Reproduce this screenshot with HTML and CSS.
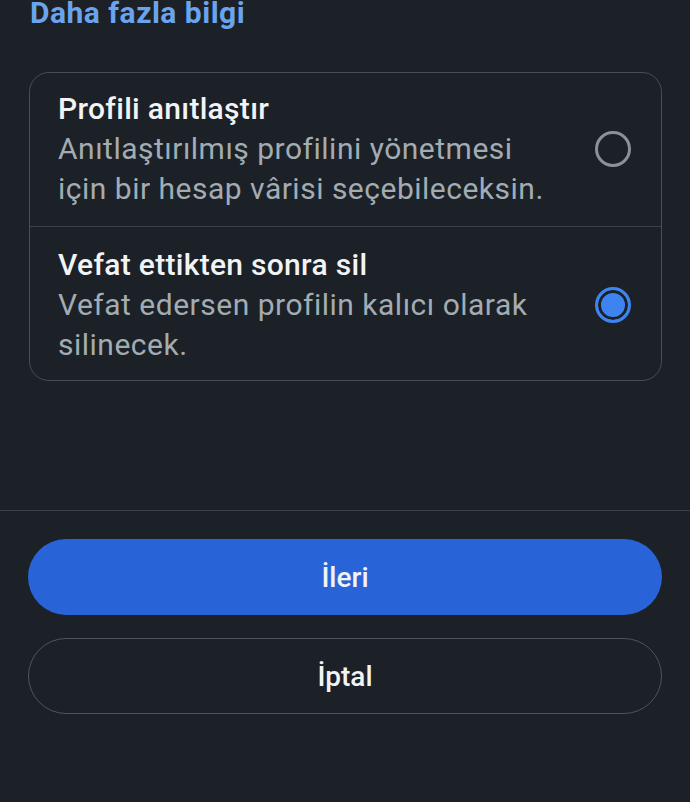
FILE: index.html
```html
<!DOCTYPE html>
<html lang="tr">
<head>
    <meta charset="utf-8">
    <title>Vefat ayarları</title>
    <link rel="stylesheet" href="styles.css">
</head>
<body>
    <div class="content">
        <a class="more-link" href="#">Daha fazla bilgi</a>

        <div class="options">
            <label class="option">
                <div class="option-text">
                    <div class="option-title">Profili anıtlaştır</div>
                    <div class="option-desc">Anıtlaştırılmış profilini yönetmesi için bir hesap vârisi seçebileceksin.</div>
                </div>
                <span class="radio"></span>
            </label>
            <label class="option">
                <div class="option-text">
                    <div class="option-title">Vefat ettikten sonra sil</div>
                    <div class="option-desc">Vefat edersen profilin kalıcı olarak silinecek.</div>
                </div>
                <span class="radio checked"></span>
            </label>
        </div>
    </div>

    <div class="footer">
        <button class="btn btn-primary">İleri</button>
        <button class="btn btn-secondary">İptal</button>
    </div>
</body>
</html>
```

FILE: styles.css
```css
body { margin: 0; background: #1b2126; font-family: Roboto, "Noto Sans", sans-serif; color: #e4e6eb; height: 802px; overflow: hidden; }
.content { padding: 0 28px 0 29px; height: 510px; box-sizing: border-box; }
.more-link { display: block; color: #6aa4ee; font-size: 30px; font-weight: 700; line-height: 26px; letter-spacing: 0.5px; text-decoration: none; padding-left: 1px; }
.options { margin-top: 46px; border: 1px solid #474e55; border-radius: 20px; }
.option { display: flex; align-items: center; padding: 16px 30px 17px 28px; gap: 40px; }
.option + .option { border-top: 1px solid #3a4147; padding-top: 18px; padding-bottom: 15px; }
.option-text { flex: 1; }
.option-title { font-size: 30px; font-weight: 500; line-height: 40px; letter-spacing: 0.3px; color: #f2f3f5; }
.option-desc { font-size: 30px; line-height: 40px; letter-spacing: 0.5px; color: #a3abb3; }
.radio { width: 30px; height: 30px; border: 3px solid #8a9299; border-radius: 50%; flex: none; }
.radio.checked { border-color: #3e84f0; background: #3e84f0; box-shadow: inset 0 0 0 3px #1b2126; }
.footer { border-top: 1px solid #3a4147; padding: 28px 28px 0 28px; display: flex; flex-direction: column; gap: 23px; }
.btn { height: 76px; border-radius: 38px; font-family: inherit; font-size: 28px; font-weight: 500; color: #f2f3f5; cursor: pointer; }
.btn-primary { background: #2864d8; border: none; }
.btn-secondary { background: transparent; border: 1.5px solid #4e555c; }
```
